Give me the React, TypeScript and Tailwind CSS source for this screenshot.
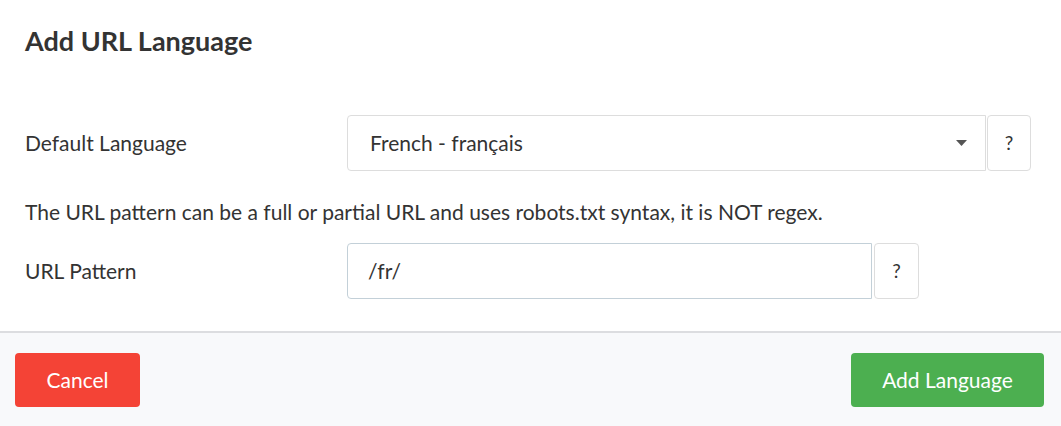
import React from "react";

export default function App() {
  return (
    <div className="w-[1061px] h-[426px] bg-white flex flex-col font-['Lato','Liberation_Sans',sans-serif] text-[#333]">
      <div className="px-[25px] pt-[25px]">
        <h1 className="text-[27px] font-bold leading-[32px] text-[#333]">Add URL Language</h1>
      </div>
      <div className="flex-1 px-[25px] pt-[58px]">
        <div className="flex items-center h-[56px]">
          <label className="w-[322px] text-[21px] leading-[28px]">Default Language</label>
          <div className="w-[639px] h-[56px] border border-[#dddddd] rounded-l-[4px] flex items-center pl-[22px] pr-[18px] justify-between">
            <span className="text-[21px] leading-[28px]">French - français</span>
            <svg width="11" height="6" viewBox="0 0 11 6">
              <path d="M0 0 L11 0 L5.5 6 Z" fill="#555" />
            </svg>
          </div>
          <div className="ml-[1px] w-[44px] h-[56px] border border-[#dddddd] rounded-[4px] flex items-center justify-center text-[19px]">?</div>
        </div>
        <p className="mt-[27px] text-[21px] leading-[28px]">
          The URL pattern can be a full or partial URL and uses robots.txt syntax, it is NOT regex.
        </p>
        <div className="flex items-center h-[56px] mt-[17px]">
          <label className="w-[322px] text-[21px] leading-[28px]">URL Pattern</label>
          <div className="w-[525px] h-[56px] border border-[#c3d0d8] rounded-l-[4px] flex items-center pl-[20px]">
            <span className="text-[21px] leading-[28px]">/fr/</span>
          </div>
          <div className="ml-[2px] w-[45px] h-[56px] border border-[#dddddd] rounded-[4px] flex items-center justify-center text-[19px]">?</div>
        </div>
      </div>
      <div className="h-[95px] border-t-2 border-[#dcdde0] bg-[#f8f9fb] flex items-center justify-between px-[15px]">
        <button className="w-[125px] h-[54px] rounded-[4px] bg-[#f44336] text-white text-[21px]">Cancel</button>
        <button className="w-[193px] h-[54px] rounded-[4px] bg-[#4caf50] text-white text-[21px] mr-[2px]">Add Language</button>
      </div>
    </div>
  );
}
